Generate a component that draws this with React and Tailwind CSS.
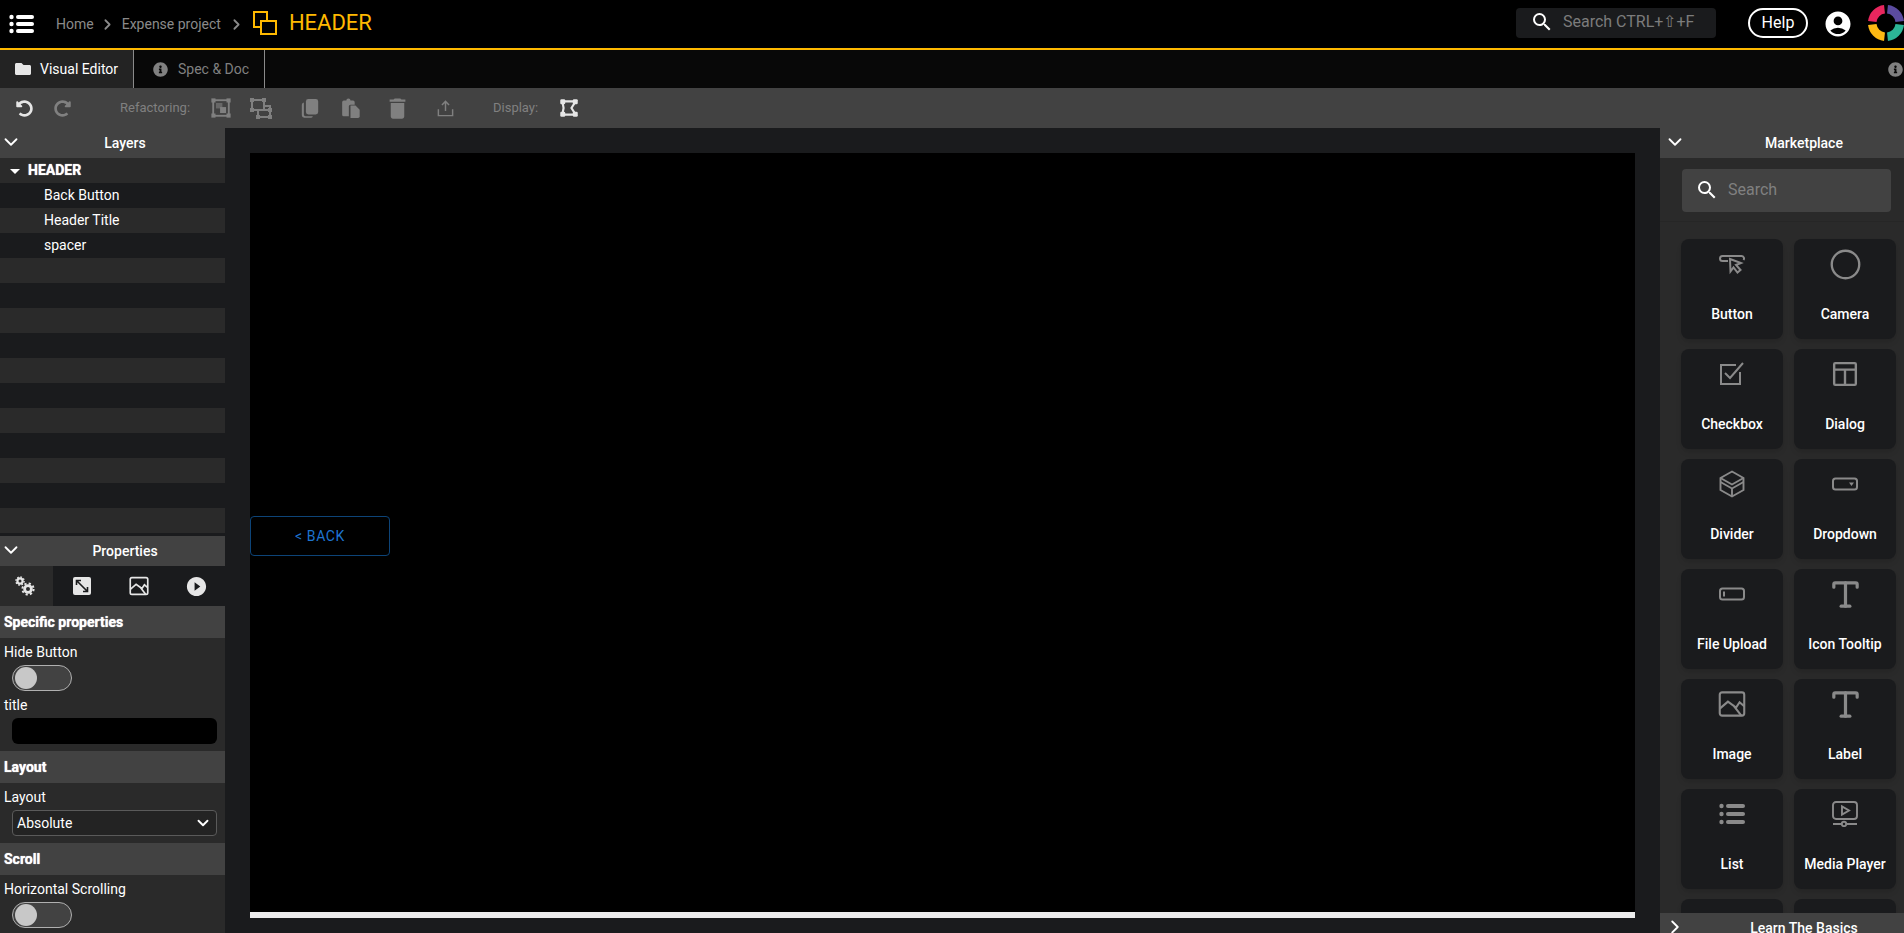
import React from "react"
import { ChevronDown, ChevronRight, Type, Circle } from "lucide-react"
import { FaFolder, FaInfoCircle, FaUndoAlt, FaRedoAlt } from "react-icons/fa"
import { MdAccountCircle, MdDelete, MdPlayCircleFilled, MdArrowDropDown, MdSearch } from "react-icons/md"

const Svg = ({ size = 24, className = "", children, ...rest }) => (
  <svg width={size} height={size} viewBox="0 0 24 24" fill="none" stroke="currentColor" strokeWidth="2" className={className} {...rest}>
    {children}
  </svg>
)

const MenuIcon = () => (
  <svg width="26" height="20" viewBox="0 0 26 20" fill="white">
    <circle cx="2.5" cy="3" r="2.2" />
    <circle cx="2.5" cy="10" r="2.2" />
    <circle cx="2.5" cy="17" r="2.2" />
    <rect x="7" y="1" width="18" height="4" rx="2" />
    <rect x="7" y="8" width="18" height="4" rx="2" />
    <rect x="7" y="15" width="18" height="4" rx="2" />
  </svg>
)

const GroupIcon = () => (
  <svg width="24" height="24" viewBox="0 0 24 24" fill="none" stroke="#ffb900" strokeWidth="2">
    <rect x="1" y="1" width="13" height="15" />
    <rect x="8" y="10" width="15" height="13" fill="#000" />
  </svg>
)

const Logo = () => (
  <svg width="36" height="36" viewBox="0 0 36 36" fill="none" strokeWidth="8.5">
    <path d="M4.3 16.5A13.8 13.8 0 0 1 16.5 4.3" stroke="#e8265e" />
    <path d="M19.5 4.3A13.8 13.8 0 0 1 31.7 16.5" stroke="#5b4b9f" />
    <path d="M31.7 19.5A13.8 13.8 0 0 1 19.5 31.7" stroke="#2cb596" />
    <path d="M16.5 31.7A13.8 13.8 0 0 1 4.3 19.5" stroke="#fdb913" />
  </svg>
)

// toolbar drawings
const SelectGroup = () => (
  <Svg size={22} className="text-[#808080]">
    <rect x="3.5" y="3.5" width="17" height="17" />
    <rect x="1.5" y="1.5" width="4.5" height="4.5" fill="currentColor" stroke="none" />
    <rect x="18" y="1.5" width="4.5" height="4.5" fill="currentColor" stroke="none" />
    <rect x="1.5" y="18" width="4.5" height="4.5" fill="currentColor" stroke="none" />
    <rect x="18" y="18" width="4.5" height="4.5" fill="currentColor" stroke="none" />
    <rect x="6.5" y="6.5" width="7" height="6" fill="currentColor" stroke="none" opacity=".6" />
    <rect x="11" y="11" width="6.5" height="6.5" fill="currentColor" stroke="none" />
  </Svg>
)

const Ungroup = () => (
  <Svg size={24} className="text-[#808080]">
    <rect x="3" y="4" width="12" height="10" />
    <rect x="9" y="14" width="12" height="7" />
    <path d="M15 10h6v4" />
    <g fill="currentColor" stroke="none">
      <rect x="1" y="2" width="4" height="4" />
      <rect x="13" y="2" width="4" height="4" />
      <rect x="1" y="12" width="4" height="4" />
      <rect x="19" y="12" width="4" height="4" />
      <rect x="7" y="19" width="4" height="4" />
      <rect x="19" y="19" width="4" height="4" />
    </g>
  </Svg>
)

const CopyIcon = () => (
  <svg width="18" height="20" viewBox="0 0 22 24" fill="#808080">
    <path d="M9 1h9a3 3 0 0 1 3 3v13a3 3 0 0 1-3 3H9a3 3 0 0 1-3-3V4a3 3 0 0 1 3-3z" />
    <path d="M1 8a3 3 0 0 1 2.5-2.8V20a2 2 0 0 0 2 2h9A3 3 0 0 1 12 24H4a3 3 0 0 1-3-3z" />
  </svg>
)

const PasteIcon = () => (
  <svg width="19" height="20" viewBox="0 0 22 24" fill="#808080">
    <path d="M3 3h3a2.5 2.5 0 0 1 5 0h3a2 2 0 0 1 2 2v3h-5a2 2 0 0 0-2 2v12H3a2 2 0 0 1-2-2V5a2 2 0 0 1 2-2z" />
    <path d="M11 9h6l5 5v8a2 2 0 0 1-2 2h-9z" />
  </svg>
)

const ShareIcon = () => (
  <Svg size={19} strokeWidth="1.8" className="text-[#808080]">
    <path d="M12 15V3M7.5 7.5 12 3l4.5 4.5M3 13v8h18v-8" />
  </Svg>
)

const DisplayIcon = () => (
  <Svg size={20} strokeWidth="2.6" className="text-[#e6e6e6]">
    <path d="M4 4h16l-5 8 5 8H4l1.5-8z" />
    <g fill="currentColor" stroke="none">
      <rect x="1.5" y="1.5" width="6" height="6" rx="1.5" />
      <rect x="16.5" y="1.5" width="6" height="6" rx="1.5" />
      <rect x="1.5" y="16.5" width="6" height="6" rx="1.5" />
      <rect x="16.5" y="16.5" width="6" height="6" rx="1.5" />
    </g>
  </Svg>
)

const CogsIcon = () => (
  <svg width="20" height="20" viewBox="0 0 20 20" fill="none" stroke="currentColor">
    <circle cx="5" cy="5" r="2.6" strokeWidth="2.2" />
    <circle cx="5" cy="5" r="4.1" strokeWidth="1.4" strokeDasharray="1.6 1.6" />
    <circle cx="13" cy="13" r="3.4" strokeWidth="2.8" />
    <circle cx="13" cy="13" r="5.6" strokeWidth="2" strokeDasharray="2.2 2.2" />
  </svg>
)

// marketplace drawings
const ButtonIcon = () => (
  <svg width="26" height="24" viewBox="0 0 26 24" fill="none" stroke="currentColor" strokeWidth="2">
    <path d="M9 9H3.5a2.5 2.5 0 0 1 0-5h19a2.5 2.5 0 0 1 2 4" />
    <path d="M11 7l11 4-5 2 4.5 5-3 2.5-4-5-3 4z" />
  </svg>
)

const CheckIcon = () => (
  <svg width="26" height="24" viewBox="0 0 26 24" fill="none" stroke="currentColor" strokeWidth="2">
    <path d="M17 3H2v19h19V10" />
    <path d="M6 11l5 5L24 1" />
  </svg>
)

const DialogIcon = () => (
  <Svg size={26} strokeWidth="2.2">
    <rect x="2" y="2" width="20" height="20" rx="1" />
    <path d="M2 8h20M12 8v14" />
  </Svg>
)

const CubeIcon = () => (
  <svg width="26" height="28" viewBox="0 0 26 28" fill="none" stroke="currentColor" strokeWidth="1.9">
    <path d="M13 1.5 24.5 8v12L13 26.5 1.5 20V8z" />
    <path d="M1.5 8 13 14.5 24.5 8M1.5 12 13 18.5 24.5 12M13 18.5v8" />
  </svg>
)

const DropdownIcon = () => (
  <svg width="26" height="14" viewBox="0 0 26 14" fill="none" stroke="currentColor" strokeWidth="2">
    <rect x="1" y="1.5" width="24" height="11" rx="2.5" />
    <path d="M17 5.5h5l-2.5 3.5z" fill="currentColor" stroke="none" />
  </svg>
)

const UploadIcon = () => (
  <svg width="26" height="14" viewBox="0 0 26 14" fill="none" stroke="currentColor" strokeWidth="2">
    <rect x="1" y="1.5" width="24" height="11" rx="2.5" />
    <rect x="4" y="4.5" width="2" height="5" fill="currentColor" stroke="none" />
  </svg>
)

const ImageIcon = ({ size = 28, strokeWidth = 1.8 }) => (
  <Svg size={size} strokeWidth={strokeWidth}>
    <rect x="1.5" y="2" width="21" height="20" rx="2" />
    <path d="M1.5 16 8.5 10l7 5 3-4.5 4 3.5M13 13l7 9" />
  </Svg>
)

const ListIcon = () => (
  <svg width="26" height="22" viewBox="0 0 26 22" fill="currentColor">
    <circle cx="2.5" cy="3" r="2.2" />
    <circle cx="2.5" cy="11" r="2.2" />
    <circle cx="2.5" cy="19" r="2.2" />
    <rect x="7" y="1" width="19" height="4" rx="2" />
    <rect x="7" y="9" width="19" height="4" rx="2" />
    <rect x="7" y="17" width="19" height="4" rx="2" />
  </svg>
)

const MediaIcon = () => (
  <svg width="26" height="26" viewBox="0 0 26 26" fill="none" stroke="currentColor" strokeWidth="1.9">
    <rect x="1" y="1" width="24" height="17" rx="3" />
    <path d="M10 5.5v8l7-4z" />
    <path d="M1 23h8M15 23h10" />
    <circle cx="12" cy="23" r="2.2" />
  </svg>
)

const widgets = [
  ["Button", <ButtonIcon />],
  ["Camera", <Circle size={33} strokeWidth={1.7} />],
  ["Checkbox", <CheckIcon />],
  ["Dialog", <DialogIcon />],
  ["Divider", <CubeIcon />],
  ["Dropdown", <DropdownIcon />],
  ["File Upload", <UploadIcon />],
  ["Icon Tooltip", <Type size={35} strokeWidth={2.2} />],
  ["Image", <ImageIcon />],
  ["Label", <Type size={35} strokeWidth={2.2} />],
  ["List", <ListIcon />],
  ["Media Player", <MediaIcon />],
  ["", null],
  ["", null],
]

const layers = ["Back Button", "Header Title", "spacer"]

function PanelHeader({ title, open = true, right = false }) {
  const Icon = open ? ChevronDown : ChevronRight
  return (
    <div
      className={`relative h-[30px] shrink-0 bg-[#424242] flex items-center justify-center text-white text-[14px] font-medium ${
        right ? "pl-[44px]" : "pl-[25px]"
      }`}
    >
      <Icon size={22} strokeWidth={2} className={`absolute top-[3px] ${right ? "left-1" : "left-0"}`} />
      {title}
    </div>
  )
}

function SectionTitle({ children }) {
  return (
    <div className="h-8 shrink-0 bg-[#424242] flex items-center pl-1 text-white text-[14px] font-bold [text-shadow:0_0_1px_#fff]">
      {children}
    </div>
  )
}

function Toggle() {
  return (
    <div className="ml-3 w-[60px] h-[26px] rounded-full border border-[#b0b0b0] bg-[#424242] flex items-center pl-0.5">
      <div className="w-[22px] h-[22px] rounded-full bg-[#c8c8c8]" />
    </div>
  )
}

function Field({ label, children }) {
  return (
    <div className="pt-[5px]">
      <div className="h-[19px] pl-1 text-[14px] leading-[19px] text-white">{label}</div>
      <div className="mt-[3px]">{children}</div>
    </div>
  )
}

function ToolSlot({ children, className = "" }) {
  return <div className={`w-10 shrink-0 flex items-center justify-center ${className}`}>{children}</div>
}

export default function App() {
  return (
    <div className="w-[1904px] h-[933px] overflow-hidden flex flex-col bg-[#1a1b1d] font-['Roboto',sans-serif]">
      {/* Top bar */}
      <div className="h-[50px] shrink-0 bg-black border-b-2 border-[#ffb900] flex items-center">
        <div className="ml-[9px] w-[47px] flex items-center">
          <MenuIcon />
        </div>
        <span className="text-[14px] text-[#8a8a8a]">Home</span>
        <div className="w-7 flex justify-center">
          <ChevronRight size={17} strokeWidth={2.5} className="text-[#8a8a8a]" />
        </div>
        <span className="text-[14px] text-[#8a8a8a]">Expense project</span>
        <div className="w-[32px] flex justify-center">
          <ChevronRight size={17} strokeWidth={2.5} className="text-[#8a8a8a]" />
        </div>
        <div className="mr-3 -mt-[2px]">
          <GroupIcon />
        </div>
        <span className="text-[22px] -mt-[3px] text-[#ffb900]">HEADER</span>
        <div className="ml-auto -mt-[2px] flex items-center">
          <div className="mr-[32px] w-[200px] h-[30px] pb-[2px] rounded-[4px] bg-[#1a1b1d] flex items-center text-[#7c7c7c] text-[16px]">
            <MdSearch size={24} className="ml-[14px] mr-[9px] text-white" />
            Search CTRL+⇧+F
          </div>
          <div className="w-[60px] h-[30px] rounded-full border-2 border-white flex items-center justify-center text-white text-[16px]">
            Help
          </div>
          <MdAccountCircle size={30} className="ml-[15px] mt-[2px] text-white" />
          <div className="ml-[15px]">
            <Logo />
          </div>
        </div>
      </div>

      {/* Tabs */}
      <div className="h-[38px] shrink-0 bg-[#080808] flex items-stretch">
        <div className="w-[134px] bg-[#232323] border-r border-[#8a8a8a] flex items-center pl-[15px] gap-[9px] text-white text-[14px]">
          <FaFolder size={16} className="text-[#e6e6e6]" />
          Visual Editor
        </div>
        <div className="w-[131px] border-r border-[#8a8a8a] flex items-center pl-[19px] gap-[10px] text-[#808080] text-[14px]">
          <FaInfoCircle size={15} />
          Spec & Doc
        </div>
        <div className="ml-auto mr-[1px] flex items-center text-[#808080]">
          <FaInfoCircle size={15} />
        </div>
      </div>

      {/* Toolbar */}
      <div className="h-10 shrink-0 bg-[#424242] flex items-center text-[13px] text-[#808080]">
        <div className="ml-[5px] w-[38px] flex justify-center">
          <FaUndoAlt size={17} className="text-[#e6e6e6]" />
        </div>
        <div className="w-[38px] flex justify-center">
          <FaRedoAlt size={17} className="text-[#808080]" />
        </div>
        <span className="ml-[39px] w-[81px]">Refactoring:</span>
        <ToolSlot>
          <SelectGroup />
        </ToolSlot>
        <ToolSlot>
          <Ungroup />
        </ToolSlot>
        <ToolSlot className="ml-[9px]">
          <CopyIcon />
        </ToolSlot>
        <ToolSlot>
          <PasteIcon />
        </ToolSlot>
        <ToolSlot className="ml-[7px]">
          <MdDelete size={27} className="text-[#808080]" />
        </ToolSlot>
        <ToolSlot className="ml-[8px]">
          <ShareIcon />
        </ToolSlot>
        <span className="ml-[28px] w-[56px]">Display:</span>
        <ToolSlot>
          <DisplayIcon />
        </ToolSlot>
      </div>

      <div className="flex-1 min-h-0 flex">
        {/* Left column */}
        <div className="w-[225px] shrink-0 flex flex-col">
          <PanelHeader title="Layers" />
          <div className="h-[375px] shrink-0 overflow-hidden flex flex-col">
            <div className="h-[25px] shrink-0 bg-[#2a2a2a] flex items-center pl-[3px] gap-[1px] text-[14px] font-bold text-white">
              <MdArrowDropDown size={24} />
              <span className="[text-shadow:0_0_1px_#fff]">HEADER</span>
            </div>
            {Array.from({ length: 14 }).map((_, i) => (
              <div
                key={i}
                className={`h-[25px] shrink-0 flex items-center pl-11 text-[14px] text-white ${
                  i % 2 === 0 ? "bg-[#1a1b1d]" : "bg-[#2a2a2a]"
                }`}
              >
                {layers[i]}
              </div>
            ))}
          </div>
          <div className="h-[3px] shrink-0" />
          <PanelHeader title="Properties" />
          <div className="flex-1 min-h-0 bg-[#2a2a2a] flex flex-col">
            <div className="h-10 shrink-0 bg-[#1a1b1d] grid grid-cols-[53px_57px_57px_58px] text-[#e6e6e6]">
              <div className="bg-[#2a2a2a] pr-1 flex items-center justify-center">
                <CogsIcon />
              </div>
              <div className="flex items-center justify-center">
                <svg width="18" height="18" viewBox="0 0 18 18">
                  <rect width="18" height="18" rx="2" fill="#e6e6e6" />
                  <path d="M3.5 3.5 14.5 14.5M3.5 8V3.5H8M14.5 10v4.5H10" fill="none" stroke="#1a1b1d" strokeWidth="1.6" />
                </svg>
              </div>
              <div className="flex items-center justify-center">
                <ImageIcon size={20} strokeWidth={2} />
              </div>
              <div className="flex items-center justify-center">
                <MdPlayCircleFilled size={23} />
              </div>
            </div>
            <SectionTitle>Specific properties</SectionTitle>
            <Field label="Hide Button">
              <Toggle />
            </Field>
            <Field label="title">
              <div className="ml-3 mr-2 h-[26px] rounded-[6px] bg-black" />
            </Field>
            <div className="h-[7px] shrink-0" />
            <SectionTitle>Layout</SectionTitle>
            <Field label="Layout">
              <div className="ml-3 mr-2 h-[26px] rounded-[4px] border border-[#5a5a5a] bg-[#232323] flex items-center justify-between pl-1 pr-1 text-[14px] text-white">
                Absolute
                <ChevronDown size={18} strokeWidth={2.5} />
              </div>
            </Field>
            <div className="h-[7px] shrink-0" />
            <SectionTitle>Scroll</SectionTitle>
            <Field label="Horizontal Scrolling">
              <Toggle />
            </Field>
          </div>
        </div>

        {/* Canvas */}
        <div className="flex-1 min-w-0 pl-[25px] pr-[25px] pt-[25px]">
          <div className="relative h-[759px] bg-black">
            <div className="absolute left-0 top-[363px] w-[140px] h-10 rounded-[4px] border border-[#0d4478] flex items-center justify-center text-[14px] tracking-[0.6px] text-[#1e74d0]">
              {"< BACK"}
            </div>
          </div>
          <div className="h-[6px] bg-[#ececec]" />
        </div>

        {/* Marketplace */}
        <div className="w-[244px] shrink-0 bg-[#2a2a2a] flex flex-col relative overflow-hidden">
          <PanelHeader title="Marketplace" right />
          <div className="h-16 shrink-0 border-b border-[#262626] pl-[22px] pr-[13px] pt-[11px]">
            <div className="h-[43px] pb-[2px] rounded-[4px] bg-[#424242] flex items-center text-[16px] text-[#808080]">
              <MdSearch size={24} className="ml-[13px] mr-[9px] text-white" />
              Search
            </div>
          </div>
          <div className="pl-[21px] pt-[17px] grid grid-cols-[102px_102px] gap-x-[11px] gap-y-[10px]">
            {widgets.map(([name, icon], i) => (
              <div key={i} className="h-[100px] rounded-lg bg-[#1a1b1d] shadow-md flex flex-col items-center">
                <div className="h-[50px] flex items-center justify-center text-[#8a8a8a]">{icon}</div>
                <div className="mt-[15px] text-[14px] font-medium text-white">{name}</div>
              </div>
            ))}
          </div>
          <div className="absolute left-0 right-0 top-[785px]">
            <PanelHeader title="Learn The Basics" open={false} right />
          </div>
        </div>
      </div>
    </div>
  )
}
